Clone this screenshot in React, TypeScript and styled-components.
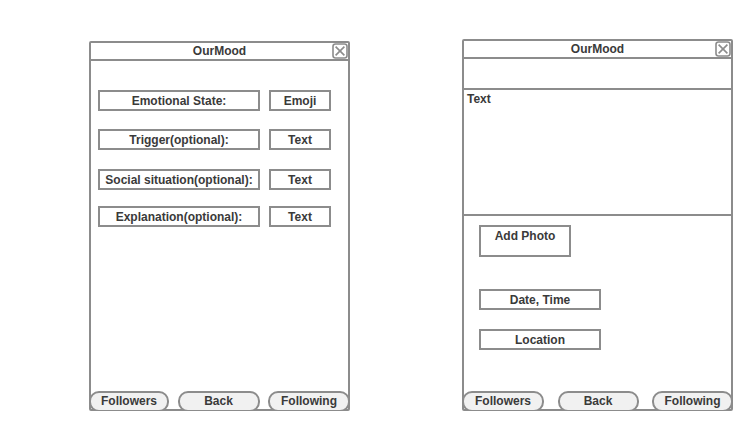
import React, { FunctionComponent } from 'react'
import styled, { createGlobalStyle } from 'styled-components'

const GlobalStyle = createGlobalStyle`
    html, body {
        margin: 0;
        padding: 0;
        background: #ffffff;
    }
    body {
        font-family: "Liberation Sans", Arial, sans-serif;
        color: #3a3a3a;
    }
`

const LINE = '#8c8c8c'

const Page = styled.div`
    display: flex;
    align-items: flex-start;
    gap: 112px;
    padding: 39px 0 0 89px;
`

const Frame = styled.div<{ $width: number; $height: number; $top: number }>`
    display: flex;
    flex-direction: column;
    box-sizing: border-box;
    width: ${(p) => p.$width}px;
    height: ${(p) => p.$height}px;
    margin-top: ${(p) => p.$top}px;
    border: 2px solid ${LINE};
    border-radius: 2px;
    background: #ffffff;
`

const TitleBar = styled.div`
    display: grid;
    grid-template-columns: 1fr auto 1fr;
    align-items: center;
    height: 16px;
    border-bottom: 2px solid ${LINE};
    font-size: 12px;
    font-weight: bold;
`

const Title = styled.span`
    grid-column: 2;
    line-height: 16px;
`

const CloseIcon = styled.svg`
    grid-column: 3;
    justify-self: end;
    display: block;
`

const Body = styled.div`
    flex: 1;
    display: flex;
    flex-direction: column;
    min-height: 0;
`

const FormList = styled.div`
    display: flex;
    flex-direction: column;
    padding: 29px 0 0 7px;
`

const FormRow = styled.div<{ $gap: number }>`
    display: flex;
    gap: 9px;
    margin-top: ${(p) => p.$gap}px;
`

const Field = styled.div<{ $width: number; $height?: number; $align?: string }>`
    box-sizing: border-box;
    width: ${(p) => p.$width}px;
    height: ${(p) => p.$height ?? 21}px;
    border: 2px solid ${LINE};
    display: flex;
    justify-content: center;
    align-items: ${(p) => p.$align ?? 'center'};
    font-size: 12px;
    font-weight: bold;
    white-space: nowrap;
`

const HeaderStrip = styled.div`
    height: 29px;
    border-bottom: 2px solid ${LINE};
`

const TextArea = styled.div`
    height: 126px;
    border-bottom: 2px solid ${LINE};
    padding: 2px 3px;
    box-sizing: border-box;
    font-size: 12px;
    font-weight: bold;
`

const Extras = styled.div`
    display: flex;
    flex-direction: column;
    align-items: flex-start;
    padding: 9px 0 0 15px;
`

const ExtraField = styled(Field)<{ $gap: number }>`
    margin-top: ${(p) => p.$gap}px;
`

const PhotoLabel = styled.span`
    margin-top: 2px;
`

const Spacer = styled.div`
    flex: 1;
`

const ButtonBar = styled.div`
    display: flex;
    justify-content: space-between;
    margin: 0 -2px -3px -2px;
`

const PillButton = styled.button<{ $width: number }>`
    box-sizing: border-box;
    width: ${(p) => p.$width}px;
    height: 21px;
    padding: 0;
    border: 2px solid ${LINE};
    border-radius: 10px;
    background: #f1f1f1;
    color: #3a3a3a;
    font-family: "Liberation Sans", Arial, sans-serif;
    font-size: 12px;
    font-weight: bold;
    line-height: 17px;
`

const Close: FunctionComponent = () => (
    <CloseIcon width="16" height="16" viewBox="0 0 16 16">
        <rect x="1" y="1" width="14" height="14" rx="2.5" fill="#fff" stroke={LINE} strokeWidth="1.6" />
        <path d="M3.6 3.6 L12.4 12.4 M12.4 3.6 L3.6 12.4" stroke={LINE} strokeWidth="1.6" />
    </CloseIcon>
)

const Header: FunctionComponent = () => (
    <TitleBar>
        <Title>OurMood</Title>
        <Close />
    </TitleBar>
)

const Buttons: FunctionComponent<{ widths: number[] }> = ({ widths }) => (
    <ButtonBar>
        <PillButton $width={widths[0]}>Followers</PillButton>
        <PillButton $width={widths[1]}>Back</PillButton>
        <PillButton $width={widths[2]}>Following</PillButton>
    </ButtonBar>
)

const rows = [
    { label: 'Emotional State:', value: 'Emoji', gap: 0 },
    { label: 'Trigger(optional):', value: 'Text', gap: 18 },
    { label: 'Social situation(optional):', value: 'Text', gap: 19 },
    { label: 'Explanation(optional):', value: 'Text', gap: 16 },
]

export default function App() {
    return (
        <>
            <GlobalStyle />
            <Page>
                <Frame $width={261} $height={370} $top={2}>
                    <Header />
                    <Body>
                        <FormList>
                            {rows.map((r) => (
                                <FormRow key={r.label} $gap={r.gap}>
                                    <Field $width={162}>{r.label}</Field>
                                    <Field $width={62}>{r.value}</Field>
                                </FormRow>
                            ))}
                        </FormList>
                        <Spacer />
                        <Buttons widths={[80, 82, 82]} />
                    </Body>
                </Frame>

                <Frame $width={271} $height={372} $top={0}>
                    <Header />
                    <Body>
                        <HeaderStrip />
                        <TextArea>Text</TextArea>
                        <Extras>
                            <ExtraField $width={92} $height={32} $align="flex-start" $gap={0}>
                                <PhotoLabel>Add Photo</PhotoLabel>
                            </ExtraField>
                            <ExtraField $width={122} $gap={32}>Date, Time</ExtraField>
                            <ExtraField $width={122} $gap={19}>Location</ExtraField>
                        </Extras>
                        <Spacer />
                        <Buttons widths={[82, 81, 81]} />
                    </Body>
                </Frame>
            </Page>
        </>
    )
}
